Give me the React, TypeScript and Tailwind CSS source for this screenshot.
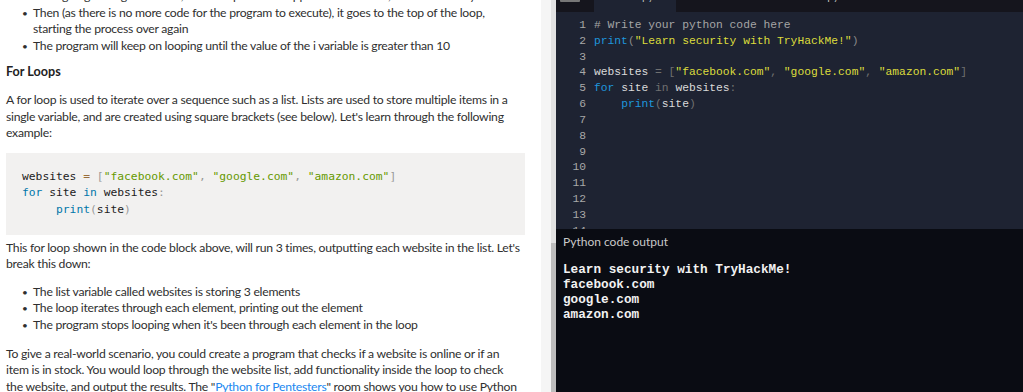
import React from "react";

const sans = { fontFamily: 'Lato, "Noto Sans", sans-serif' };

function Bullet({ children }: { children: React.ReactNode }) {
  return (
    <li className="flex">
      <span className="w-[27px] shrink-0 pl-[16px] text-[10px]">•</span>
      <span>{children}</span>
    </li>
  );
}

function LeftPanel() {
  return (
    <div
      className="w-[541px] h-[392px] shrink-0 overflow-hidden bg-white text-[#2f2f2f] text-[12.2px] tracking-[-0.25px] leading-[16.6px]"
      style={sans}
    >
      <div className="pl-[6px] pr-[8px] -mt-[12px]">
        <ul>
          <Bullet>Then going through the code, it will output i and happens to add 1 to i, so it is now 1 by</Bullet>
          <Bullet>
            Then (as there is no more code for the program to execute), it goes to the top of the loop,
            <br />
            starting the process over again
          </Bullet>
          <Bullet>The program will keep on looping until the value of the i variable is greater than 10</Bullet>
        </ul>
        <h4 className="mt-[10px] font-bold text-[12.6px] tracking-normal text-[#222]">For Loops</h4>
        <p className="mt-[11px]">
          A for loop is used to iterate over a sequence such as a list. Lists are used to store multiple items in a
          <br />
          single variable, and are created using square brackets (see below). Let's learn through the following
          <br />
          example:
        </p>
        <pre
          className="mt-[11px] w-[519px] bg-[#f2f1f0] px-[16px] py-[16px] text-[11.3px] tracking-normal leading-[16.6px] text-[#222]"
          style={{ fontFamily: '"DejaVu Sans Mono", monospace' }}
        >
          <div>
            websites <span className="text-[#9a6e3a]">=</span> <span className="text-[#999]">[</span>
            <span className="text-[#690]">"facebook.com"</span>
            <span className="text-[#999]">,</span> <span className="text-[#690]">"google.com"</span>
            <span className="text-[#999]">,</span> <span className="text-[#690]">"amazon.com"</span>
            <span className="text-[#999]">]</span>
          </div>
          <div>
            <span className="text-[#07a]">for</span> site <span className="text-[#07a]">in</span> websites
            <span className="text-[#999]">:</span>
          </div>
          <div>
            {"     "}
            <span className="text-[#07a]">print</span>
            <span className="text-[#999]">(</span>site<span className="text-[#999]">)</span>
          </div>
        </pre>
        <p className="mt-[5px]">
          This for loop shown in the code block above, will run 3 times, outputting each website in the list. Let's
          <br />
          break this down:
        </p>
        <ul className="mt-[11px]">
          <Bullet>The list variable called websites is storing 3 elements</Bullet>
          <Bullet>The loop iterates through each element, printing out the element</Bullet>
          <Bullet>The program stops looping when it's been through each element in the loop</Bullet>
        </ul>
        <p className="mt-[12px]">
          To give a real-world scenario, you could create a program that checks if a website is online or if an
          <br />
          item is in stock. You would loop through the website list, add functionality inside the loop to check
          <br />
          the website, and output the results. The "<span className="text-[#2188f0]">Python for Pentesters</span>"
          room shows you how to use Python
        </p>
      </div>
    </div>
  );
}

function Scrollbar() {
  return (
    <div className="flex h-[392px] shrink-0">
      <div className="w-[10px] bg-[#f5f5f5]" />
      <div className="w-[5px] flex flex-col">
        <div className="h-[243px] bg-[#e2e2e2]" />
        <div className="flex-1 bg-[#bdbdbd]" />
      </div>
    </div>
  );
}

const lines: React.ReactNode[] = [
  <span className="text-[#a5a5a5]"># Write your python code here</span>,
  <>
    <span className="text-[#1e95dc]">print</span>
    <span className="text-[#8a8a8a]">(</span>
    <span className="text-[#dcdc3c]">"Learn security with TryHackMe!"</span>
    <span className="text-[#8a8a8a]">)</span>
  </>,
  <></>,
  <>
    <span className="text-[#dadada]">websites</span> <span className="text-[#707070]">=</span>{" "}
    <span className="text-[#707070]">[</span>
    <span className="text-[#dcdc3c]">"facebook.com"</span>
    <span className="text-[#707070]">,</span> <span className="text-[#dcdc3c]">"google.com"</span>
    <span className="text-[#707070]">,</span> <span className="text-[#dcdc3c]">"amazon.com"</span>
    <span className="text-[#707070]">]</span>
  </>,
  <>
    <span className="text-[#1e95dc]">for</span> <span className="text-[#dadada]">site</span>{" "}
    <span className="text-[#707070]">in</span> <span className="text-[#dadada]">websites</span>
    <span className="text-[#707070]">:</span>
  </>,
  <>
    {"    "}
    <span className="text-[#1e95dc]">print</span>
    <span className="text-[#707070]">(</span>
    <span className="text-[#dadada]">site</span>
    <span className="text-[#707070]">)</span>
  </>,
];

function Editor() {
  const mono = { fontFamily: '"Liberation Mono", monospace' };
  return (
    <div className="flex-1 flex flex-col h-[392px] min-w-0">
      <div className="h-[12px] bg-[#15151d] flex items-start overflow-hidden text-[11px] text-[#bbb]" style={sans}>
        <div className="ml-[4px] w-[20px] h-[2px] bg-[#777] rounded-b-[1px]" />
        <div className="ml-[14px] w-[82px] h-[12px] bg-[#1e2332] flex justify-center">
          <span className="-mt-[12px]">main.py</span>
        </div>
        <span className="ml-[20px] -mt-[12px]">▸ Run</span>
        <span className="ml-[90px] -mt-[12px]">Copy</span>
        <span className="ml-[80px] -mt-[12px]">Reset</span>
      </div>
      <div className="h-[217px] bg-[#1e2332] overflow-hidden pt-[6px] text-[11.3px] leading-[15.83px]" style={mono}>
        {Array.from({ length: 14 }).map((_, i) => (
          <div key={i} className="flex whitespace-pre">
            <span className="w-[30px] text-right text-[#a8a8a8]">{i + 1}</span>
            <span className="ml-[8px]">{lines[i] ?? ""}</span>
          </div>
        ))}
      </div>
      <div className="flex-1 bg-[#0a0c13] px-[7px]">
        <div className="pt-[5px] text-[12px] leading-[16px] text-[#c9c9c9]" style={sans}>
          Python code output
        </div>
        <pre
          className="mt-[12px] text-[12.7px] leading-[15px] font-bold text-[#f2f2f2]"
          style={{ fontFamily: '"Liberation Mono", "Courier New", monospace' }}
        >
          {"Learn security with TryHackMe!\nfacebook.com\ngoogle.com\namazon.com"}
        </pre>
      </div>
    </div>
  );
}

export default function App() {
  return (
    <div className="flex w-[1023px] h-[392px] overflow-hidden">
      <LeftPanel />
      <Scrollbar />
      <Editor />
    </div>
  );
}
